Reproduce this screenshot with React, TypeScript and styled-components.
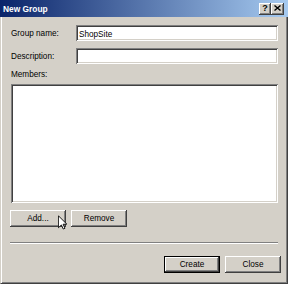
import styled, { createGlobalStyle } from "styled-components";

const GlobalStyle = createGlobalStyle`
  html, body { margin: 0; padding: 0; background: #d4d0c8; }
  body { font-family: "Liberation Sans", Arial, sans-serif; }
`;

const face = "#d4d0c8";

const Window = styled.div`
  position: relative;
  width: 288px; height: 284px;
  display: flex; flex-direction: column;
  background: ${face};
  overflow: hidden;
`;

const TitleBar = styled.div`
  height: 17px; flex: none;
  display: flex; align-items: center;
  padding: 0 3px 0 3px;
  background: linear-gradient(to right, #0a246a 0%, #a6caf0 100%);
  color: #fff;
  font-weight: bold; font-size: 8.4px;
`;

const TitleText = styled.span`
  flex: 1;
  white-space: nowrap;
`;

const CaptionButtons = styled.div`
  display: flex; gap: 0;
  margin-right: 1px;
`;

const CaptionButton = styled.div<{ $w: number }>`
  width: ${(p) => p.$w}px; height: 12px;
  display: flex; align-items: center; justify-content: center;
  background: ${face};
  color: #000;
  font-size: 9px; font-weight: bold;
  box-shadow: inset -1px -1px #404040, inset 1px 1px #fff, inset -2px -2px #808080;
  box-sizing: border-box;
  padding-bottom: 1px;
`;

const Body = styled.div`
  flex: 1;
  display: flex; flex-direction: column;
  padding: 8px 6px 9px 8px;
  border-left: 1px solid ${face};
  border-right: 1px solid #404040;
  border-bottom: 1px solid #404040;
  box-shadow: inset 1px 0 #fff, inset -1px -1px #808080;
  color: #000;
  font-size: 8.2px;
`;

const FieldRow = styled.div<{ $mt?: number }>`
  display: flex; align-items: center;
  height: 16px;
  margin-top: ${(p) => p.$mt ?? 0}px;
`;

const Label = styled.label`
  width: 65px; flex: none;
  padding-left: 2px;
  white-space: nowrap;
`;

const TextField = styled.div`
  width: 202px; height: 16px;
  box-sizing: border-box;
  padding: 2px 3px 0 3px;
  display: flex; align-items: center;
  background: #fff;
  box-shadow: inset 1px 1px #808080, inset -1px -1px #fff, inset 2px 2px #404040, inset -2px -2px ${face};
`;

const SectionLabel = styled.div`
  height: 10px; line-height: 10px;
  margin-top: 6px;
  padding-left: 2px;
`;

const ListBox = styled.div`
  margin: 4px 0 0 2px;
  width: 267px; height: 119px;
  background: #fff;
  box-shadow: inset 1px 1px #808080, inset -1px -1px #fff, inset 2px 2px #404040, inset -2px -2px ${face};
`;

const ButtonRow = styled.div<{ $end?: boolean; $mt: number }>`
  display: flex; gap: 5px;
  justify-content: ${(p) => (p.$end ? "flex-end" : "flex-start")};
  margin-top: ${(p) => p.$mt}px;
  padding-left: 1px;
`;

const Button = styled.div<{ $default?: boolean }>`
  width: 56px; height: 17px;
  box-sizing: border-box;
  display: flex; align-items: center; justify-content: center;
  background: ${face};
  box-shadow: ${(p) =>
    p.$default
      ? "inset 0 0 0 1px #000, inset -2px -2px #404040, inset 2px 2px #fff, inset -3px -3px #808080"
      : "inset -1px -1px #404040, inset 1px 1px #fff, inset -2px -2px #808080"};
`;

const Separator = styled.div`
  margin: 15px 0 0 1px;
  width: 268px; height: 1px;
  background: #808080;
  border-bottom: 1px solid #fff;
`;

const Cursor = styled.svg`
  position: absolute;
  left: 58px; top: 215px;
`;

export default function App() {
  return (
    <>
      <GlobalStyle />
      <Window>
        <TitleBar>
          <TitleText>New Group</TitleText>
          <CaptionButtons>
            <CaptionButton $w={12}>?</CaptionButton>
            <CaptionButton $w={13}>
              <svg width="7" height="6" viewBox="0 0 7 6">
                <path d="M0.5 0.5 L6.5 5.5 M6.5 0.5 L0.5 5.5" stroke="#000" strokeWidth="1.4" fill="none" />
              </svg>
            </CaptionButton>
          </CaptionButtons>
        </TitleBar>
        <Body>
          <FieldRow>
            <Label>Group name:</Label>
            <TextField>ShopSite</TextField>
          </FieldRow>
          <FieldRow $mt={7}>
            <Label>Description:</Label>
            <TextField />
          </FieldRow>
          <SectionLabel>Members:</SectionLabel>
          <ListBox />
          <ButtonRow $mt={7}>
            <Button>Add...</Button>
            <Button>Remove</Button>
          </ButtonRow>
          <Separator />
          <ButtonRow $end $mt={12}>
            <Button $default>Create</Button>
            <Button>Close</Button>
          </ButtonRow>
        </Body>
        <Cursor width="9" height="15" viewBox="0 0 12 19">
          <path
            d="M0.5 0.5 L0.5 16.5 L4.5 12.8 L7 18.2 L9.3 17.2 L6.8 11.8 L11.8 11.8 Z"
            fill="#fff" stroke="#000" strokeWidth="1.2" strokeLinejoin="miter"
          />
        </Cursor>
      </Window>
    </>
  );
}
